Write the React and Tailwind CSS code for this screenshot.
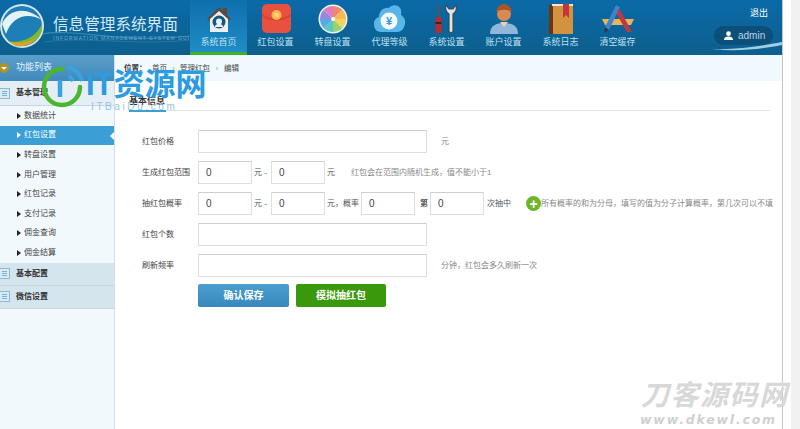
import React from "react";

const Input = ({ w = "w-[229px]", v = "" }) => (
  <div className={`${w} h-[23px] border border-[#dcdfdf] border-t-[#cdd0d0] bg-white pl-[7px] text-[10px] leading-[21px] text-[#444] shrink-0`}>{v}</div>
);

const HomeIcon = () => (
  <svg width="30" height="30" viewBox="0 0 30 30">
    <path d="M3 15 15 3 27 15 25 17 15 7 5 17Z" fill="#5d4a3c" />
    <path d="M6 15 15 7 24 15V28H6Z" fill="#eceff1" />
    <rect x="19" y="4" width="4" height="7" fill="#5d4a3c" />
    <circle cx="15" cy="18" r="6.5" fill="#16577f" />
    <circle cx="15" cy="17.5" r="3" fill="#e8f3f8" />
    <path d="M11 22c2-3 6-3 8 0v1h-8Z" fill="#e8f3f8" />
  </svg>
);
const PacketIcon = () => (
  <svg width="30" height="30" viewBox="0 0 30 30">
    <rect x="1" y="0" width="29" height="29" rx="5" fill="#e8513f" />
    <path d="M1 10c8 6 21 6 29 0v2c-8 6-21 6-29 0Z" fill="#d9412f" />
    <circle cx="15.5" cy="11" r="5" fill="#f4b64a" />
    <circle cx="15.5" cy="11" r="2.5" fill="#f9d27c" />
  </svg>
);
const WheelIcon = () => {
  const colors = ["#f08a6c", "#f7b955", "#f4d35e", "#96d36c", "#56c7c3", "#58a8e8", "#9b86dd", "#e07cc4"];
  const seg = (i) => {
    const a = (i * 45 - 90) * Math.PI / 180, b = ((i + 1) * 45 - 90) * Math.PI / 180;
    return `M15 15L${15 + 13 * Math.cos(a)} ${15 + 13 * Math.sin(a)}A13 13 0 0 1 ${15 + 13 * Math.cos(b)} ${15 + 13 * Math.sin(b)}Z`;
  };
  return (
    <svg width="30" height="30" viewBox="0 0 30 30">
      <circle cx="15" cy="15" r="14.5" fill="#eef3f5" />
      {colors.map((c, i) => <path key={c} d={seg(i)} fill={c} />)}
      <circle cx="15" cy="15" r="2" fill="#fff" />
    </svg>
  );
};
const CloudIcon = () => (
  <svg width="32" height="30" viewBox="0 0 32 30">
    <path d="M7 28C2 28 0 24 0 20c0-4 2-6 5-7C5 7 10 3 15 4c2-3 8-4 11 0 2 3 1 5 1 7 3 2 5 5 4 9-1 5-4 8-8 8Z" fill="#58b7e8" />
    <circle cx="15" cy="17" r="8.5" fill="#f4fafc" />
    <text x="15" y="21" textAnchor="middle" fontSize="11" fontWeight="700" fill="#2f9ad6" fontFamily="Liberation Sans, sans-serif">¥</text>
  </svg>
);
const ToolsIcon = () => (
  <svg width="26" height="30" viewBox="0 0 26 30">
    <rect x="3.5" y="0" width="2" height="12" fill="#555" />
    <rect x="1.5" y="13" width="6" height="16" rx="1" fill="#bb2b2b" />
    <rect x="1.5" y="18" width="6" height="2" fill="#3b2424" />
    <path d="M12 1c-1 4 0 7 3 9v17c0 2 4 2 4 0V10c3-2 4-5 3-9l-3 4h-4Z" fill="#dfe4e6" stroke="#3d4a52" strokeWidth="1.2" />
  </svg>
);
const UserIcon = () => (
  <svg width="30" height="30" viewBox="0 0 30 30">
    <path d="M1 30c0-9 7-11 14-11s14 2 14 11Z" fill="#8fb7d9" />
    <path d="M11 18h8l-4 5Z" fill="#f3d0a8" />
    <circle cx="15" cy="10" r="7" fill="#d98a52" />
    <path d="M7 8c1-6 5-8 8-8s7 2 8 8c-5-3-11-3-16 0Z" fill="#a9552a" />
  </svg>
);
const BookIcon = () => (
  <svg width="24" height="30" viewBox="0 0 24 30">
    <rect x="0" y="1" width="24" height="29" fill="#d2923f" />
    <rect x="0" y="1" width="4" height="29" fill="#6b3216" />
    <rect x="3" y="0" width="21" height="2" fill="#f2e7d6" />
    <path d="M14 0h6v14l-3-3-3 3Z" fill="#c4363a" />
  </svg>
);
const ClearIcon = () => (
  <svg width="34" height="30" viewBox="0 0 34 30">
    <path d="M1 15h32l-3 6H4Z" fill="#e8b45c" />
    <path d="M18 4 31 28h-5L15 9Z" fill="#b93a40" />
    <path d="M19 3 8 26l-5 3 1-6L15 1Z" fill="#3f82c8" />
    <path d="M4 23 8 26 3 29Z" fill="#22364a" />
  </svg>
);

const nav = [
  ["系统首页", HomeIcon, "active"],
  ["红包设置", PacketIcon],
  ["转盘设置", WheelIcon],
  ["代理等级", CloudIcon],
  ["系统设置", ToolsIcon],
  ["账户设置", UserIcon],
  ["系统日志", BookIcon],
  ["清空缓存", ClearIcon],
];

const subs = ["数据统计", "红包设置", "转盘设置", "用户管理", "红包记录", "支付记录", "佣金查询", "佣金结算"];

const Bullet = ({ light }) => (
  <span className={`w-0 h-0 border-y-[3px] border-y-transparent border-l-[4px] ${light ? "border-l-white" : "border-l-[#222]"}`} />
);
const ListIcon = () => (
  <span className="ml-[-1px] w-[11px] h-[11px] border border-[#8dbbd6] bg-[#d6ebf6] flex flex-col justify-center gap-[1px] px-[2px] shrink-0">
    <i className="h-px bg-[#7fb0cc]" /><i className="h-px bg-[#7fb0cc]" /><i className="h-px bg-[#7fb0cc]" />
  </span>
);
const GroupRow = ({ children, h = "h-[23px]", bg = "bg-[#d5e5ee]" }) => (
  <div className={`${h} shrink-0 flex items-center gap-[6px] ${bg} border-b border-[#c3d6e1] text-[8px] font-bold text-[#333]`}>
    <ListIcon />
    <span>{children}</span>
  </div>
);

const Label = ({ children }) => <div className="w-[56px] shrink-0 text-[8px] text-[#444]">{children}</div>;
const Row = ({ children }) => <div className="flex items-center h-[31px]">{children}</div>;
const Unit = ({ children, cls = "" }) => <span className={`text-[8px] text-[#555] whitespace-nowrap shrink-0 ${cls}`}>{children}</span>;
const Hint = ({ children, cls = "" }) => <span className={`text-[8px] text-[#888] whitespace-nowrap shrink-0 ${cls}`}>{children}</span>;

export default function App() {
  return (
    <div className="relative w-[800px] h-[429px] overflow-hidden flex bg-white font-['Liberation_Sans','Noto_Sans_CJK_SC',sans-serif]">
      <div className="w-[783px] shrink-0 flex flex-col border-r border-[#c4c4c4]">
        <header className="relative h-[55px] shrink-0 flex overflow-hidden bg-gradient-to-b from-[#0a6aa8] to-[#0d5f8c]">
          <div className="relative w-[190px] shrink-0 flex flex-col pl-[53px] pt-[16px]">
            <svg className="absolute left-0 top-0" width="190" height="55" viewBox="0 0 190 55">
              <path d="M40 34C80 28 120 44 190 36" stroke="#6cb4d8" strokeWidth="1.2" fill="none" opacity="0.5" />
              <path d="M44 42C90 36 130 46 190 40" stroke="#6cb4d8" strokeWidth="0.8" fill="none" opacity="0.3" />
              <circle cx="22" cy="26" r="22" fill="#d5e6ee" />
              <circle cx="22" cy="26" r="20" fill="#1d7fb5" />
              <path d="M2 24C8 10 26 5 42 20 28 12 12 16 6 34Z" fill="#e5f2f6" />
              <path d="M8 41C20 44 36 38 42 24 44 38 30 48 16 46Z" fill="#7eb92f" />
              <path d="M10 42C22 44 32 42 38 36 32 45 22 48 14 45Z" fill="#e0a02b" />
            </svg>
            <div className="relative text-[15.6px] leading-[18px] text-[#d6eaf5] whitespace-nowrap">信息管理系统界面</div>
            <div className="relative mt-[1px] text-[5px] leading-[6px] tracking-[1px] text-[#6fa9ca] whitespace-nowrap">INFORMATION MANAGEMENT SYSTEM GUI</div>
          </div>
          <nav className="flex">
            {nav.map(([label, Icon, active]) => (
              <div key={label} className={`w-[57px] h-[55px] flex flex-col items-center pt-[4px] ${active ? "bg-gradient-to-b from-[#0f6fae] to-[#1f8cc4] border-b-[3px] border-b-[#3fae2a]" : ""}`}>
                <div className="h-[30px] flex items-center justify-center"><Icon /></div>
                <span className="mt-[2px] text-[9px] leading-[12px] text-[#bfe0ef] whitespace-nowrap">{label}</span>
              </div>
            ))}
          </nav>
          <div className="relative flex-1 flex flex-col items-end pr-[9px] pt-[8px]">
            <span className="text-[9px] leading-[11px] text-white mr-[5px]">退出</span>
            <div className="mt-[7px] w-[59px] h-[19px] rounded-full bg-[#0c4f78] flex items-center pl-[10px] gap-[5px] text-[10px] text-[#b7d6e6]">
              <svg width="9" height="9" viewBox="0 0 10 10"><circle cx="5" cy="3" r="2.6" fill="#fff" /><path d="M0 10c0-3 2-4 5-4s5 1 5 4Z" fill="#fff" /></svg>
              admin
            </div>
          </div>
          <svg className="absolute right-0 bottom-0" width="70" height="14" viewBox="0 0 70 14">
            <path d="M0 8C25 9 50 5 70 1V4C50 8 25 11 0 8Z" fill="#b9e3f2" opacity="0.85" />
          </svg>
        </header>
        <div className="flex-1 flex min-h-0">
          <aside className="w-[115px] shrink-0 bg-[#f2f9fd] border-r border-[#cfe0ea] flex flex-col">
            <div className="h-[26px] shrink-0 flex items-center gap-[7px] bg-gradient-to-b from-[#5a9fca] to-[#3f8abb] text-[9px] text-[#e8f4fa]">
              <span className="ml-[-1px] w-[10px] h-[10px] rounded-full bg-[#b09325] flex items-center justify-center">
                <span className="w-0 h-0 border-x-[3px] border-x-transparent border-t-[3px] border-t-white" />
              </span>
              功能列表
            </div>
            <GroupRow h="h-[25px]" bg="bg-[#e4eef4]">基本管理</GroupRow>
            <div className="flex flex-col">
              {subs.map((s) => {
                const on = s === "红包设置";
                return (
                  <div key={s} className={`relative h-[19.6px] flex items-center pl-[17px] gap-[3px] text-[8px] ${on ? "bg-[#3b9fd6] text-white" : "text-[#444]"}`}>
                    <Bullet light={on} />
                    {s}
                    {on && <span className="absolute right-0 top-[6px] w-0 h-0 border-y-[4px] border-y-transparent border-r-[4px] border-r-white" />}
                  </div>
                );
              })}
            </div>
            <GroupRow>基本配置</GroupRow>
            <GroupRow>微信设置</GroupRow>
          </aside>
          <main className="flex-1 flex flex-col min-w-0">
            <div className="h-[26px] shrink-0 bg-[#f0f9fd] flex items-center pl-[9px] pt-[1px] text-[7.5px] text-[#444]">
              <b className="text-[#333] mr-[5.5px]">位置：</b>
              <span>首页</span><span className="w-[13px] text-center text-[#999]">›</span>
              <span>管理红包</span><span className="w-[14px] text-center text-[#999]">›</span>
              <span>编辑</span>
            </div>
            <div className="mx-[12px] h-[30px] shrink-0 border-b border-[#e6e6e6] relative">
              <span className="absolute left-[2px] top-[14px] h-[17px] pr-[1px] text-[9px] leading-[12px] font-bold text-[#333] border-b-[2px] border-b-[#3b9fd6]">基本信息</span>
            </div>
            <form className="pl-[27px] pt-[15px] flex flex-col">
              <Row>
                <Label>红包价格</Label><Input />
                <Hint cls="ml-[14px]">元</Hint>
              </Row>
              <Row>
                <Label>生成红包范围</Label><Input w="w-[54px]" v="0" />
                <Unit cls="w-[19px] pl-[2px]">元 -</Unit><Input w="w-[54px]" v="0" />
                <Unit cls="ml-[2px]">元</Unit>
                <Hint cls="ml-[16px]">红包会在范围内随机生成，值不能小于1</Hint>
              </Row>
              <Row>
                <Label>抽红包概率</Label><Input w="w-[54px]" v="0" />
                <Unit cls="w-[19px] pl-[2px]">元 -</Unit><Input w="w-[54px]" v="0" />
                <Unit cls="w-[36px] pl-[2px]">元，概率</Unit><Input w="w-[54px]" v="0" />
                <Unit cls="w-[15px] pl-[5px] font-bold">第</Unit><Input w="w-[54px]" v="0" />
                <Unit cls="ml-[3px] text-[#333]">次抽中</Unit>
                <span className="ml-[15px] w-[15px] h-[15px] rounded-full bg-[#6fb52c] flex items-center justify-center text-white font-bold text-[14px] leading-none shrink-0">+</span>
                <Hint>所有概率的和为分母，填写的值为分子计算概率，第几次可以不填</Hint>
              </Row>
              <Row><Label>红包个数</Label><Input /></Row>
              <Row>
                <Label>刷新频率</Label><Input />
                <Hint cls="ml-[14px]">分钟，红包会多久刷新一次</Hint>
              </Row>
              <div className="flex gap-[7px] pl-[56px] mt-[3px]">
                <button type="button" className="w-[91px] h-[23px] rounded-[2px] bg-gradient-to-b from-[#4a9fd0] to-[#3888bb] text-white font-bold text-[10px] font-['Liberation_Serif','Noto_Sans_CJK_SC',serif]">确认保存</button>
                <button type="button" className="w-[90px] h-[23px] rounded-[2px] bg-[#3a980c] text-white font-bold text-[10px] font-['Liberation_Serif','Noto_Sans_CJK_SC',serif]">模拟抽红包</button>
              </div>
            </form>
          </main>
        </div>
      </div>
      <div className="flex-1 flex justify-end">
        <div className="w-[9px] bg-[#f1f1f1]" />
      </div>

      {/* Watermarks over the page */}
      <svg className="absolute left-[41px] top-[66px]" width="44" height="42" viewBox="0 0 44 42" fill="none">
        <path d="M21 3A18 18 0 1 0 39 21" stroke="#4cb52f" strokeWidth="4.5" strokeLinecap="round" />
        <path d="M19 14v17" stroke="#3aa3df" strokeWidth="4.5" />
        <path d="M28 10a15 15 0 0 1 4 5" stroke="#3aa3df" strokeWidth="4" />
        <path d="M26 1a18 18 0 0 1 15 14" stroke="#3aa3df" strokeWidth="4" />
      </svg>
      <div className="absolute left-[86px] top-[67px] text-[31px] leading-[36px] font-bold text-[#2d9be0] whitespace-nowrap">IT资源网</div>
      <div className="absolute left-[91px] top-[101px] text-[10px] leading-[12px] tracking-[2.6px] text-[#8fc4e6] whitespace-nowrap">ITBaiDu.com</div>
      <div className="absolute left-[641px] top-[382px] text-[28px] leading-[28px] font-bold italic tracking-[1.5px] text-[#d8d8d8] whitespace-nowrap">刀客源码网</div>
      <div className="absolute left-[640px] top-[413px] text-[12.5px] leading-[14px] font-bold italic tracking-[1.8px] text-[#d0d0d0] whitespace-nowrap font-['DejaVu_Sans',sans-serif]">www.dkewl.com</div>
    </div>
  );
}
